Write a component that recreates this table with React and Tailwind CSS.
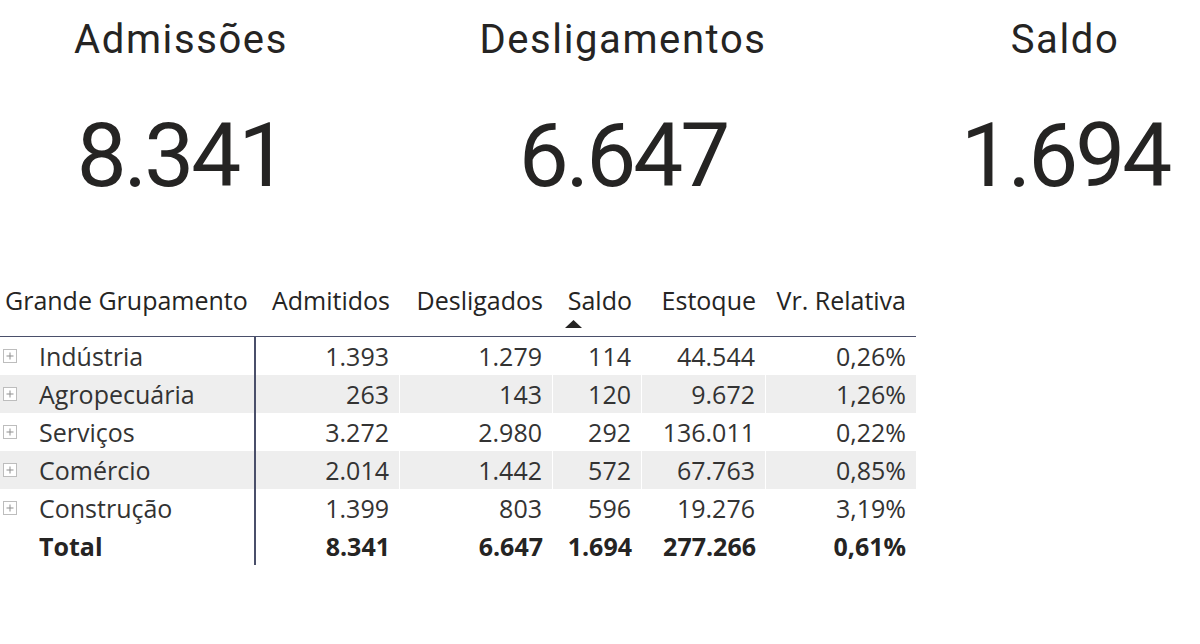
import React from "react";

const rows = [
  ["Indústria", "1.393", "1.279", "114", "44.544", "0,26%"],
  ["Agropecuária", "263", "143", "120", "9.672", "1,26%"],
  ["Serviços", "3.272", "2.980", "292", "136.011", "0,22%"],
  ["Comércio", "2.014", "1.442", "572", "67.763", "0,85%"],
  ["Construção", "1.399", "803", "596", "19.276", "3,19%"],
];

const widths = ["w-[144px]", "w-[153px]", "w-[89px]", "w-[124px]", "w-[150px]"];

function Card({ title, value }) {
  return (
    <div className="flex flex-col items-center w-[260px]">
      <div className="h-[40px] leading-[40px] text-[40px] text-[#252423] tracking-[1.6px] whitespace-nowrap">
        {title}
      </div>
      <div className="mt-[51px] h-[90px] leading-[90px] text-[89px] text-[#252423] tracking-[-3px] whitespace-nowrap">
        {value}
      </div>
    </div>
  );
}

function PlusBox() {
  return (
    <svg width="14" height="14" viewBox="0 0 14 14" className="shrink-0">
      <rect x="0.5" y="0.5" width="13" height="13" fill="white" stroke="#bdbdbd" />
      <path d="M3.5 7h7M7 3.5v7" stroke="#8f8f8f" strokeWidth="1" />
    </svg>
  );
}

export default function App() {
  return (
    <div className="w-[1200px] h-[644px] bg-white overflow-hidden relative" style={{ fontFamily: "Roboto, sans-serif" }}>
      <div className="flex pt-[20px] pl-[51px] gap-[182px]">
        <Card title="Admissões" value="8.341" />
        <Card title="Desligamentos" value="6.647" />
        <Card title="Saldo" value="1.694" />
      </div>

      <div
        className="mt-[81px] w-[916px] text-[25px] text-[#252423]"
        style={{ fontFamily: '"Open Sans", "Noto Sans", sans-serif' }}
      >
        <div className="flex h-[55px] border-b border-[#4a4f6a]">
          <div className="w-[256px] pl-[5px] pt-[1px] leading-[34px] whitespace-nowrap">Grande Grupamento</div>
          {["Admitidos", "Desligados", "Saldo", "Estoque", "Vr. Relativa"].map((h, i) => (
            <div key={h} className={widths[i] + " relative pr-[10px] pt-[1px] leading-[34px] text-right whitespace-nowrap"}>
              {h}
              {h === "Saldo" && (
                <svg width="17" height="8" viewBox="0 0 17 8" className="absolute left-[12px] top-[38px]">
                  <path d="M0 8L8.5 0L17 8Z" fill="#252423" />
                </svg>
              )}
            </div>
          ))}
        </div>
        {rows.map((r, ri) => (
          <div key={r[0]} className={"flex h-[38px] items-stretch " + (ri % 2 === 1 ? "bg-[#eeeeee]" : "bg-white")}>
            <div className="w-[256px] flex items-center pl-[3px] border-r-2 border-[#4a4f6a] whitespace-nowrap">
              <PlusBox />
              <span className="ml-[22px] leading-[34px] text-[#333333]">{r[0]}</span>
            </div>
            {r.slice(1).map((v, i) => (
              <div
                key={i}
                className={widths[i] + " flex items-center justify-end pr-[10px] leading-[34px] text-[#333333] " + (i < 4 ? "border-r border-white" : "")}
              >
                {v}
              </div>
            ))}
          </div>
        ))}
        <div className="flex h-[38px] font-bold">
          <div className="w-[256px] flex items-center pl-[39px] border-r-2 border-[#4a4f6a] leading-[34px]">Total</div>
          {["8.341", "6.647", "1.694", "277.266", "0,61%"].map((v, i) => (
            <div key={i} className={widths[i] + " flex items-center justify-end pr-[10px] leading-[34px]"}>
              {v}
            </div>
          ))}
        </div>
      </div>
    </div>
  );
}
